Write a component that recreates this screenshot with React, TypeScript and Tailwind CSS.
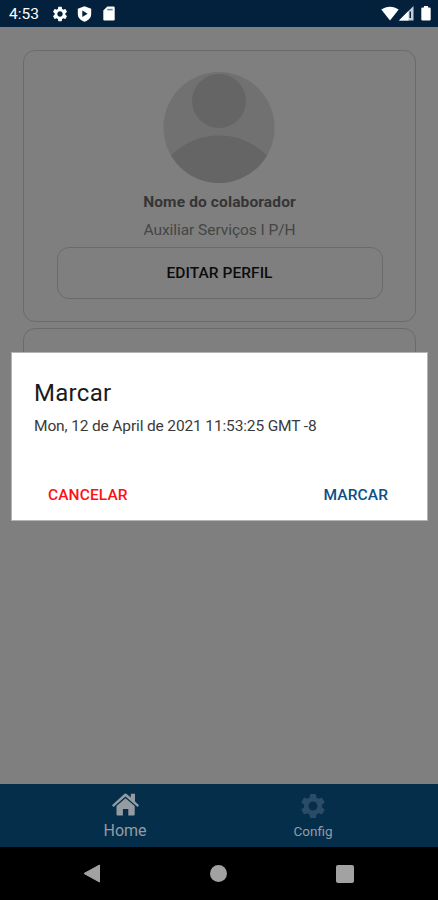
import React from "react";
import { MdSettings } from "react-icons/md";

const StatusBar: React.FC = () => {
  return (
    <header className="flex h-[27px] shrink-0 items-center bg-[#03213c] pl-[9px] pr-[7px] text-white">
      <span className="w-[42px] whitespace-nowrap pt-[2px] text-[15.5px] leading-[25px]">4:53</span>
      <MdSettings size={18} />
      <svg width="15" height="16" viewBox="0 0 15 16" className="ml-[8px]">
        <path d="M7.5 0.3 14.2 2.8V8c0 3.8-2.8 6.5-6.7 7.7C3.6 14.5.8 11.8.8 8V2.8Z" fill="currentColor" />
        <path d="M5.3 4.5v6.4l5.3-3.2Z" fill="#03213c" />
      </svg>
      <svg width="12" height="15" viewBox="0 0 12 15" className="ml-[11px]">
        <path d="M4.3.5H10.5Q11.7.5 11.7 1.7V13.3Q11.7 14.5 10.5 14.5H1.5Q.3 14.5.3 13.3V4.5Z" fill="currentColor" />
        <path d="M4.2 2.8h5.5v1.6H4.2z" fill="#71849a" />
      </svg>
      <div className="ml-auto flex items-center">
        <svg width="18" height="15" viewBox="0 0 18 15">
          <path d="M0.3 3.6C5.3-.3 12.7-.3 17.700 3.600L9 14.500Z" fill="currentColor" />
        </svg>
        <svg width="15" height="15" viewBox="0 0 15 15">
          <path d="M0 14.5 14.5 0V14.5Z" fill="#c5ced6" />
          <path d="M0 14.5 9.5 5V14.5Z" fill="currentColor" />
          <path d="M10.500 5.500h1.500v6.500h-1.500z" fill="#03213c" />
        </svg>
        <svg width="10" height="15" viewBox="0 0 10 15" className="ml-[7px]">
          <path d="M3 0h4v1.500h1.500q1.200 0 1.200 1.200v10.600q0 1.200-1.200 1.200h-7q-1.200 0-1.200-1.200V2.700q0-1.200 1.200-1.200H3z" fill="currentColor" />
        </svg>
      </div>
    </header>
  );
};

const Avatar: React.FC = () => {
  return (
    <svg width="113" height="112" viewBox="0 0 113 112" className="shrink-0">
      <clipPath id="avatar">
        <circle cx="56" cy="55.5" r="55.5" />
      </clipPath>
      <g clipPath="url(#avatar)">
        <rect width="113" height="112" fill="#717171" />
        <circle cx="56" cy="29" r="27" fill="#656565" />
        <circle cx="56" cy="131" r="67.5" fill="#656565" />
      </g>
    </svg>
  );
};

const HomeIcon: React.FC = () => {
  return (
    <svg width="27" height="23" viewBox="0 0 27 23" fill="currentColor">
      <path d="M18.800 0.800H23V8.500L27 12.200 25.600 14 13.500 3.600 1.400 14 0 12.200 12 1.200Q13.500 0 15 1.200L18.800 4.600Z" />
      <path d="M13.500 5.200 22.700 13V21.500Q22.700 22.500 21.700 22.500H16.300V16H10.900V22.500H5.500Q4.500 22.500 4.500 21.500V13Z" />
    </svg>
  );
};

const ProfileCard: React.FC = () => {
  return (
    <section className="flex h-[272px] flex-col items-center rounded-xl border border-[#6b6b6b] pt-[21px]">
      <Avatar />
      <h1 className="mt-[6px] whitespace-nowrap text-[15.5px] font-bold leading-6 tracking-[0.13px] text-[#353535]">
        Nome do colaborador
      </h1>
      <p className="mt-[4px] whitespace-nowrap text-[15.5px] leading-6 tracking-[-0.05px] text-[#454545]">
        Auxiliar Serviços I P/H
      </p>
      <button className="mt-[5px] h-[52px] w-[326px] whitespace-nowrap rounded-xl border border-[#6b6b6b] pt-[2px] text-[15.5px] font-medium tracking-[0.05px] text-[#0c0c0c]">
        EDITAR PERFIL
      </button>
    </section>
  );
};

const MarcarDialog: React.FC = () => {
  return (
    <div className="absolute left-[11px] top-[352px] flex h-[169px] w-[417px] flex-col border border-[#b4b4b4] bg-white">
      <h2 className="ml-[22px] mt-6 whitespace-nowrap text-[24px] leading-8 tracking-[0.3px] text-[#1c1c1c]">
        Marcar
      </h2>
      <p className="ml-[22px] mt-[5px] whitespace-nowrap text-[15.5px] leading-6 tracking-[-0.14px] text-[#3a3a3a]">
        Mon, 12 de April de 2021 11:53:25 GMT -8
      </p>
      <div className="mt-auto flex justify-between pb-[13px] pl-9 pr-[39px] text-[15.5px] font-medium leading-6 tracking-[0.1px]">
        <button className="text-[#ff1010]">CANCELAR</button>
        <button className="text-[#0b4f88]">MARCAR</button>
      </div>
    </div>
  );
};

const TabBar: React.FC = () => {
  return (
    <nav className="flex h-[63px] shrink-0 bg-[#052e4b] px-[31px] text-[#949ca2]">
      <div className="flex w-[188px] flex-col items-center pt-[9px]">
        <HomeIcon />
        <span className="pt-[3px] text-[16px] leading-6">Home</span>
      </div>
      <div className="flex w-[188px] flex-col items-center pt-[7px]">
        <MdSettings size={30} className="text-[#2b4c67]" />
        <span className="text-[13.5px] leading-5">Config</span>
      </div>
    </nav>
  );
};

const SystemNav: React.FC = () => {
  return (
    <footer className="flex h-[53px] shrink-0 items-center justify-between bg-black pl-[83px] pr-[84px] text-[#a2a2a2]">
      <svg width="18" height="19" viewBox="0 0 18 19">
        <path d="M1 9.5 16.5 1V18Z" fill="currentColor" stroke="currentColor" strokeLinejoin="round" />
      </svg>
      <div className="size-[17px] rounded-full bg-[#a2a2a2]" />
      <div className="size-[18px] rounded-[2px] bg-[#a2a2a2]" />
    </footer>
  );
};

const App: React.FC = () => {
  return (
    <div className="relative flex h-[900px] w-[438px] flex-col overflow-hidden bg-[#7f7f7f] font-['Roboto',sans-serif]">
      <StatusBar />
      <main className="flex flex-1 flex-col gap-[6px] pl-[23px] pr-[22px] pt-[23px]">
        <ProfileCard />
        <section className="h-[120px] rounded-xl border border-[#6b6b6b]" />
      </main>
      <TabBar />
      <SystemNav />
      <MarcarDialog />
    </div>
  );
};

export default App;
